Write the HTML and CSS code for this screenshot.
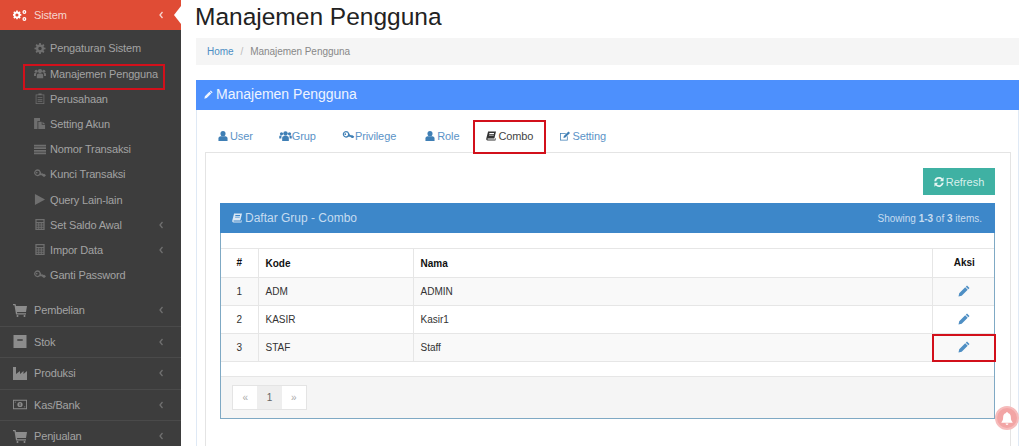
FILE: index.html
```html
<!DOCTYPE html>
<html>
<head>
    <meta charset="utf-8">
    <title>Manajemen Pengguna</title>
    <link rel="stylesheet" href="styles.css">
</head>
<body>
    <svg class="defs" width="0" height="0">
        <symbol id="i-cogs" viewBox="0 0 16 14"><path d="M5.500 2.500l1.200.4.8-.8 1.300 1.300-.8.8.4 1.200h1.100v1.900H8.400l-.4 1.200.8.8-1.300 1.300-.8-.8-1.200.4v1.100H3.600v-1.100l-1.200-.4-.8.8L.3 9.300l.8-.8-.4-1.200H0V5.400h.7l.4-1.200-.8-.8 1.300-1.300.8.8 1.200-.4V1.400h1.900zM4.500 4.600a1.800 1.800 0 1 0 0 3.600 1.800 1.800 0 0 0 0-3.600z"/><circle cx="13" cy="3" r="2.200"/><circle cx="13" cy="11" r="2.200"/><circle cx="13" cy="3" r=".8" fill="#e04c35"/><circle cx="13" cy="11" r=".8" fill="#e04c35"/></symbol>
        <symbol id="i-cog" viewBox="0 0 14 14"><path d="M6 0h2l.3 2 1.300.5L11.200 1.300l1.500 1.500-1.200 1.600.5 1.300 2 .3v2l-2 .3-.5 1.300 1.200 1.600-1.500 1.500-1.600-1.200-1.300.5-.3 2H6l-.3-2-1.300-.5-1.600 1.200-1.500-1.500 1.200-1.600-.5-1.300-2-.3V6l2-.3.5-1.300-1.200-1.600 1.500-1.500 1.600 1.200 1.300-.5zM7 4.800a2.200 2.200 0 1 0 0 4.400 2.200 2.200 0 0 0 0-4.400z"/></symbol>
        <symbol id="i-users" viewBox="0 0 15 12"><circle cx="7.500" cy="3" r="2.700"/><circle cx="2.700" cy="3.300" r="1.900"/><circle cx="12.300" cy="3.300" r="1.900"/><path d="M3.500 12V8.500C3.500 7 4.500 6 6 6h3c1.500 0 2.500 1 2.500 2.500V12zM0 9V7c0-1 .6-1.600 1.600-1.600h1.500C2.700 6.200 2.500 7 2.500 8v1zM15 9V7c0-1-.6-1.600-1.600-1.600h-1.500c.4.800.6 1.600.6 2.600v1z"/></symbol>
        <symbol id="i-user" viewBox="0 0 10 11"><circle cx="5" cy="2.900" r="2.800"/><path d="M0 11V8.200C0 6.700 1 5.700 2.500 5.700h5C9 5.700 10 6.700 10 8.200V11z"/></symbol>
        <symbol id="i-company" viewBox="0 0 11 14"><path d="M3.500 2V.5h4V2H11v12H0V2zM1 3v10h9V3zM2.500 5h6v1h-6zM2.500 7.500h6v1h-6zM2.500 10h6v1h-6z"/></symbol>
        <symbol id="i-files" viewBox="0 0 14 13"><path d="M0 0h7v3.500H4V13H0zM5 4.500h4V8h4v5H5zM10 4.500l3 2.500h-3z"/></symbol>
        <symbol id="i-list" viewBox="0 0 14 11"><path d="M0 0h14v2H0zM0 3h14v2H0zM0 6h14v2H0zM0 9h14v2H0z"/></symbol>
        <symbol id="i-key" viewBox="0 0 14 12"><path d="M4 0a4 4 0 0 1 3.800 2.800L9 5l1-.5 1 1 1-.5 2 2-1.500 1.500h-1.500L9 7H6.800A4 4 0 1 1 4 0zM4 1.500a2.500 2.500 0 1 0 0 5 2.500 2.500 0 0 0 0-5zM3.200 2.800a1 1 0 1 1 0 2 1 1 0 0 1 0-2z" fill-rule="evenodd"/></symbol>
        <symbol id="i-play" viewBox="0 0 11 12"><path d="M0 0l11 6-11 6z"/></symbol>
        <symbol id="i-calc" viewBox="0 0 11 13"><path d="M0 0h11v13H0zM1.500 1.500v2h8v-2zM1.500 5v1.500h2V5zM4.500 5v1.500h2V5zM7.500 5v1.500h2V5zM1.500 7.700v1.500h2V7.700zM4.500 7.700v1.500h2V7.700zM7.500 7.700v1.500h2V7.700zM1.500 10.300v1.200h2v-1.200zM4.500 10.300v1.200h2v-1.200zM7.500 10.300v1.200h2v-1.200z" fill-rule="evenodd"/></symbol>
        <symbol id="i-cart" viewBox="0 0 14 13"><path d="M0 0h2.500L3 2h11l-1 6H4l.2 1.200H13v1.300H3L1.500 1.300H0zM4.500 11a1 1 0 1 1 0 2 1 1 0 0 1 0-2zM11.500 11a1 1 0 1 1 0 2 1 1 0 0 1 0-2z"/></symbol>
        <symbol id="i-box" viewBox="0 0 12 12"><path d="M0 0h12v12H0zM3.500 4v1.200h5V4z" fill-rule="evenodd"/></symbol>
        <symbol id="i-factory" viewBox="0 0 14 13"><path d="M0 0h3v7l4-3v3l3.500-3v3L14 4v9H0z"/></symbol>
        <symbol id="i-money" viewBox="0 0 15 10"><path d="M0 0h15v10H0zM1 1v8h13V1zM7.500 2.200a2.800 2.800 0 1 1 0 5.600 2.800 2.800 0 0 1 0-5.600zM7 3.500v3h1v-3zM2 2h1.500L2 3.500zM13 8h-1.500L13 6.500z" fill-rule="evenodd"/></symbol>
        <symbol id="i-pencil" viewBox="0 0 12 12"><path d="M9 .5l2.500 2.500-1.200 1.200-2.500-2.500zM7.200 2.300l2.500 2.500-6 6L.5 11.500l.7-3.200z"/></symbol>
        <symbol id="i-book" viewBox="0 0 12 11"><path d="M2.500 0H12L10 8.500H2.300c-.8 0-.9 1.200 0 1.200h8.700l.4-1.700.6.300-.7 2.700H2C.5 11 0 9.800.4 8.300zM4 2v1h5.500l.2-1zM3.700 4v1h5.500l.2-1z" fill-rule="evenodd"/></symbol>
        <symbol id="i-edit" viewBox="0 0 13 12"><path d="M0 2h8L7 3H1v8h8V7l1-1v6H0z"/><path d="M11 0l2 2-6 6-2.500.5L5 6z"/></symbol>
        <symbol id="i-refresh" viewBox="0 0 12 12"><path d="M6 0c1.600 0 3 .6 4 1.700L11.500.4V5H7l1.700-1.700A3.500 3.500 0 0 0 2.600 5H.3A5.800 5.800 0 0 1 6 0zM.5 7H5L3.300 8.700A3.500 3.500 0 0 0 9.400 7h2.300A5.800 5.800 0 0 1 2 10.300L.5 11.600z"/></symbol>
        <symbol id="i-chevron" viewBox="0 0 6 10"><path d="M4.500 2L2 5l2.500 3" fill="none" stroke="currentColor" stroke-width="1.300"/></symbol>
    </svg>

    <div class="page">
        <!--sidebar-->
        <aside class="sidebar">
            <div class="menu-head active">
                <svg class="ico"><use href="#i-cogs"/></svg><span class="grow">Sistem</span>
                <svg class="chev"><use href="#i-chevron"/></svg>
                <span class="notch"></span>
            </div>
            <ul class="submenu">
                <li><svg class="ico-sm"><use href="#i-cog"/></svg><span class="grow">Pengaturan Sistem</span></li>
                <li><svg class="ico-sm"><use href="#i-users"/></svg><span class="grow">Manajemen Pengguna</span></li>
                <li><svg class="ico-sm"><use href="#i-company"/></svg><span class="grow">Perusahaan</span></li>
                <li><svg class="ico-sm"><use href="#i-files"/></svg><span class="grow">Setting Akun</span></li>
                <li><svg class="ico-sm"><use href="#i-list"/></svg><span class="grow">Nomor Transaksi</span></li>
                <li><svg class="ico-sm"><use href="#i-key"/></svg><span class="grow">Kunci Transaksi</span></li>
                <li><svg class="ico-sm"><use href="#i-play"/></svg><span class="grow">Query Lain-lain</span></li>
                <li><svg class="ico-sm"><use href="#i-calc"/></svg><span class="grow">Set Saldo Awal</span><svg class="chev"><use href="#i-chevron"/></svg></li>
                <li><svg class="ico-sm"><use href="#i-calc"/></svg><span class="grow">Impor Data</span><svg class="chev"><use href="#i-chevron"/></svg></li>
                <li><svg class="ico-sm"><use href="#i-key"/></svg><span class="grow">Ganti Password</span></li>
            </ul>
            <div class="menu-head"><svg class="ico"><use href="#i-cart"/></svg><span class="grow">Pembelian</span><svg class="chev"><use href="#i-chevron"/></svg></div>
            <div class="menu-head"><svg class="ico"><use href="#i-box"/></svg><span class="grow">Stok</span><svg class="chev"><use href="#i-chevron"/></svg></div>
            <div class="menu-head"><svg class="ico"><use href="#i-factory"/></svg><span class="grow">Produksi</span><svg class="chev"><use href="#i-chevron"/></svg></div>
            <div class="menu-head"><svg class="ico"><use href="#i-money"/></svg><span class="grow">Kas/Bank</span><svg class="chev"><use href="#i-chevron"/></svg></div>
            <div class="menu-head"><svg class="ico"><use href="#i-cart"/></svg><span class="grow">Penjualan</span><svg class="chev"><use href="#i-chevron"/></svg></div>
        </aside>

        <!--isi halaman-->
        <main class="content">
            <h1 class="page-title">Manajemen Pengguna</h1>
            <div class="breadcrumb"><a>Home</a><span class="sep">/</span><span>Manajemen Pengguna</span></div>

            <section class="panel">
                <div class="panel-head"><svg class="ico-head"><use href="#i-pencil"/></svg>Manajemen Pengguna</div>
                <div class="panel-body">
                    <ul class="tabs">
                        <li><svg class="ico-tab"><use href="#i-user"/></svg>User</li>
                        <li><svg class="ico-tab wide"><use href="#i-users"/></svg>Grup</li>
                        <li><svg class="ico-tab wide"><use href="#i-key"/></svg>Privilege</li>
                        <li class="tab-role"><svg class="ico-tab"><use href="#i-user"/></svg>Role</li>
                        <li class="selected"><svg class="ico-tab"><use href="#i-book"/></svg>Combo</li>
                        <li class="tab-setting"><svg class="ico-tab"><use href="#i-edit"/></svg>Setting</li>
                    </ul>
                    <div class="tab-pane">
                        <div class="toolbar">
                            <button class="btn-refresh"><svg class="ico-tab"><use href="#i-refresh"/></svg>Refresh</button>
                        </div>
                        <div class="grid-panel">
                            <div class="grid-head">
                                <span><svg class="ico-tab"><use href="#i-book"/></svg>Daftar Grup - Combo</span>
                                <span class="summary">Showing <b>1-3</b> of <b>3</b> items.</span>
                            </div>
                            <div class="grid-wrap">
                                <table>
                                    <thead>
                                        <tr><th class="c-no">#</th><th class="c-kode">Kode</th><th>Nama</th><th class="c-aksi">Aksi</th></tr>
                                    </thead>
                                    <tbody>
                                        <tr><td class="c-no">1</td><td>ADM</td><td>ADMIN</td><td class="c-aksi"><svg class="ico-edit"><use href="#i-pencil"/></svg></td></tr>
                                        <tr><td class="c-no">2</td><td>KASIR</td><td>Kasir1</td><td class="c-aksi"><svg class="ico-edit"><use href="#i-pencil"/></svg></td></tr>
                                        <tr><td class="c-no">3</td><td>STAF</td><td>Staff</td><td class="c-aksi"><svg class="ico-edit"><use href="#i-pencil"/></svg></td></tr>
                                    </tbody>
                                </table>
                            </div>
                            <div class="grid-foot">
                                <ul class="pager">
                                    <li>«</li><li class="current">1</li><li>»</li>
                                </ul>
                            </div>
                        </div>
                    </div>
                </div>
            </section>
        </main>
    </div>

    <!--kotak merah penanda-->
    <div class="mark mark-menu"></div>
    <div class="mark mark-tab"></div>
    <div class="mark mark-edit"></div>

    <div class="bell">
        <svg viewBox="0 0 14 15" width="12" height="13"><path d="M7 0a1 1 0 0 1 1 1.100C10.300 1.600 11.500 3.500 11.500 6c0 3 .8 4.500 2 5.800v.7H.5v-.7c1.200-1.300 2-2.800 2-5.800 0-2.500 1.200-4.400 3.500-4.900A1 1 0 0 1 7 0zM5.300 13.300h3.400a1.700 1.700 0 0 1-3.400 0z" fill="#fff"/></svg>
    </div>
</body>
</html>
```

FILE: styles.css
```css
* {
    box-sizing: border-box;
}
html, body {
    margin: 0;
    height: 446px;
    overflow: hidden;
    background: #fff;
    font-family: "Liberation Sans", Arial, sans-serif;
}
ul {
    list-style: none;
    margin: 0;
    padding: 0;
}
.defs {
    position: absolute;
}
.page {
    display: flex;
    height: 446px;
}

/* sidebar */
.sidebar {
    width: 181px;
    flex: none;
    background: #3d3d3d;
    color: #a3a3a3;
    font-size: 11px;
    letter-spacing: -0.15px;
    white-space: nowrap;
}
.grow {
    flex: 1;
}
.menu-head {
    display: flex;
    align-items: center;
    height: 31.400px;
    padding: 0 17px 0 13px;
    border-top: 1px solid #4a4a4a;
    fill: #8c8c8c;
}
.menu-head.active {
    position: relative;
    height: 30px;
    border-top: 0;
    background: #e04c35;
    color: #f6d5cf;
    fill: #fff;
}
.submenu + .menu-head {
    border-top: 0;
}
.notch {
    position: absolute;
    right: 0;
    top: 6px;
    border: 9px solid transparent;
    border-right: 7px solid #fff;
    border-left: 0;
}
.ico {
    width: 14px;
    height: 13px;
    margin-right: 7px;
    flex: none;
}
.chev {
    width: 6px;
    height: 10px;
    flex: none;
    color: #6f6f6f;
}
.active .chev {
    color: #f6d5cf;
}
.submenu {
    padding: 5.800px 0 6.700px;
}
.submenu li {
    display: flex;
    align-items: center;
    height: 25.200px;
    padding: 0 17px 0 34px;
    fill: #6f6f6f;
}
.ico-sm {
    width: 12px;
    height: 11px;
    margin-right: 4px;
    flex: none;
}

/* isi */
.content {
    flex: 1;
    min-width: 0;
    padding: 0 5px 0 15px;
}
.page-title {
    margin: 0 0 0 -1px;
    height: 38px;
    padding-top: 2px;
    font-size: 24.500px;
    line-height: 30px;
    font-weight: normal;
    color: #222;
}
.breadcrumb {
    display: flex;
    align-items: center;
    height: 27px;
    padding: 0 11px;
    background: #f5f5f5;
    font-size: 10px;
    letter-spacing: -0.05px;
    color: #888;
}
.breadcrumb a {
    color: #4d8ec4;
}
.sep {
    margin: 0 7px;
    color: #bbb;
}
.panel {
    margin-top: 15px;
    border-left: 1px solid #dfe9f5;
    border-right: 1px solid #dfe9f5;
}
.panel-head {
    display: flex;
    align-items: center;
    height: 30px;
    margin: 0 -1px;
    padding: 0 0 2px 8px;
    background: #4d90fd;
    color: #eef4ff;
    font-size: 14px;
    fill: #eef4ff;
}
.ico-head {
    width: 9px;
    height: 9px;
    margin-right: 3px;
}
.panel-body {
    padding: 10px 7px 0 8px;
}
.tabs {
    display: flex;
    height: 32px;
    gap: 1px;
    padding-left: .5px;
    font-size: 11px;
    letter-spacing: -0.1px;
    color: #5b93c7;
    fill: #3f7fb5;
}
.tabs li {
    display: flex;
    align-items: center;
    padding: 0 12.500px;
}
.tabs .tab-role {
    margin-left: 3px;
}
.tabs .selected {
    margin-left: 1px;
    color: #444;
    fill: #333;
}
.tabs .tab-setting {
    margin-left: 1px;
}
.ico-tab {
    width: 10px;
    height: 10px;
    margin-right: 2px;
    flex: none;
}
.ico-tab.wide {
    width: 13px;
    margin-right: 0;
}
.grid-head .ico-tab {
    margin-right: 3px;
}
.tab-pane {
    height: 300px;
    padding: 15px 15px 0 14px;
    border: 1px solid #e4e4e4;
}
.toolbar {
    display: flex;
    justify-content: flex-end;
    height: 35px;
}
.btn-refresh {
    display: flex;
    align-items: center;
    justify-content: center;
    width: 72px;
    height: 27px;
    padding: 0;
    border: 0;
    background: #3fb1a3;
    color: #d8f0ec;
    fill: #e6f5f2;
    font: 11px "Liberation Sans", Arial, sans-serif;
}

/* grid */
.grid-panel {
    height: 216px;
    border: 1px solid #7fa9c4;
    border-top: 0;
}
.grid-head {
    display: flex;
    align-items: center;
    justify-content: space-between;
    height: 30px;
    margin: 0 -1px;
    padding: 0 13px 0 12px;
    background: #3d87c9;
    color: #c6dcf0;
    font-size: 12px;
    fill: #dbe8f4;
}
.grid-head .ico-tab {
    vertical-align: -1px;
}
.summary {
    font-size: 10px;
}
.grid-wrap {
    height: 143px;
    padding-top: 15px;
}
table {
    width: 100%;
    border-collapse: collapse;
    table-layout: fixed;
    font-size: 10px;
    color: #333;
}
th, td {
    height: 28px;
    padding: 0 7px;
    border: 1px solid #e6e6e6;
    text-align: left;
    vertical-align: middle;
}
th {
    height: 29px;
    color: #111;
}
td {
    padding-bottom: 1px;
}
th:first-child, td:first-child {
    border-left: 0;
}
th:last-child, td:last-child {
    border-right: 0;
}
tbody tr:nth-child(odd) {
    background: #f9f9f9;
}
table .c-no {
    width: 37px;
    padding: 0 0 1px;
    text-align: center;
}
.c-kode {
    width: 155px;
}
table .c-aksi {
    width: 62px;
    padding: 0 0 2px 2px;
    text-align: center;
}
.ico-edit {
    width: 12px;
    height: 12px;
    fill: #4f8fc4;
    vertical-align: middle;
}
.grid-foot {
    height: 42px;
    padding: 8px 11px;
    border-top: 1px solid #e6e6e6;
    background: #f5f5f5;
}
.pager {
    display: flex;
    width: 75px;
    height: 25px;
    border: 1px solid #e4e4e4;
    background: #fff;
    font-size: 10px;
    color: #aaa;
}
.pager li {
    flex: 1;
    display: flex;
    align-items: center;
    justify-content: center;
}
.pager .current {
    background: #eee;
    color: #666;
}

/* penanda merah */
.mark {
    position: absolute;
    border: 2px solid #d2101b;
}
.mark-menu {
    left: 23px;
    top: 64px;
    width: 142px;
    height: 26px;
}
.mark-tab {
    left: 473px;
    top: 120px;
    width: 73px;
    height: 34px;
}
.mark-edit {
    left: 932px;
    top: 334px;
    width: 64px;
    height: 28px;
}
.bell {
    position: absolute;
    left: 995px;
    top: 406px;
    width: 24px;
    height: 24px;
    display: flex;
    align-items: center;
    justify-content: center;
    border-radius: 50%;
    background: #f2a5a5;
    border: 2px solid #f6bcbc;
}
```
